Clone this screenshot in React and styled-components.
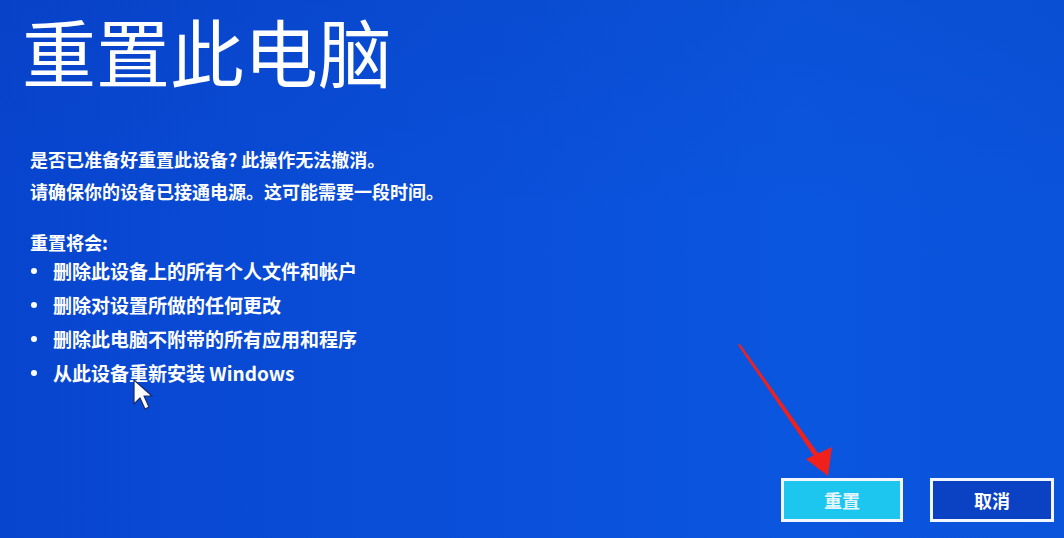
import styled, { createGlobalStyle } from "styled-components";

const GlobalStyle = createGlobalStyle`
    html, body {
        margin: 0;
        padding: 0;
        width: 100%;
        height: 100%;
        overflow: hidden;
    }
    body {
        font-family: "Noto Sans CJK SC", "Noto Sans", sans-serif;
    }
`;

const Screen = styled.div`
    position: relative;
    width: 1064px;
    height: 538px;
    box-sizing: border-box;
    display: flex;
    flex-direction: column;
    color: #fff;
    background:
        linear-gradient(180deg, rgba(0, 30, 120, 0.08), rgba(0, 0, 0, 0) 40%),
        linear-gradient(90deg, #0845cf 0%, #0a4fd9 45%, #0b56df 75%, #0a53db 100%);
    overflow: hidden;
`;

const Title = styled.h1`
    margin: 0;
    padding: 0 0 0 22px;
    font-size: 74px;
    line-height: 100px;
    font-weight: 400;
`;

const Body = styled.div`
    padding: 43px 0 0 30px;
`;

const Para = styled.p`
    margin: 0;
    font-size: 18px;
    line-height: 32px;
    font-weight: 600;
`;

const Heading = styled.p`
    margin: 23px 0 0 0;
    font-size: 18px;
    line-height: 24px;
    font-weight: 600;
`;

const List = styled.ul`
    margin: 0;
    padding: 0;
    list-style: none;
`;

const Item = styled.li`
    display: flex;
    align-items: center;
    font-size: 19px;
    line-height: 34px;
    font-weight: 600;
    &::before {
        content: "";
        width: 6px;
        height: 6px;
        border-radius: 50%;
        background: #fff;
        margin: 0 16px 0 1px;
    }
`;

const Footer = styled.div`
    margin-top: auto;
    display: flex;
    justify-content: flex-end;
    gap: 27px;
    padding: 0 10px 16px 0;
`;

const Button = styled.button`
    width: ${(p) => p.$w}px;
    height: 44px;
    box-sizing: border-box;
    border: 3px solid #f2f6ff;
    background: ${(p) => (p.$primary ? "#1cc6ef" : "#0b42c4")};
    color: ${(p) => (p.$primary ? "#e6f6ff" : "#fff")};
    font-family: "Noto Sans CJK SC", sans-serif;
    font-size: 18px;
    font-weight: 700;
    cursor: pointer;
`;

const Overlay = styled.svg`
    position: absolute;
    left: ${(p) => p.$x}px;
    top: ${(p) => p.$y}px;
    pointer-events: none;
`;

const App = () => {
    return (
        <Screen>
            <GlobalStyle />
            <Title>重置此电脑</Title>
            <Body>
                <Para>是否已准备好重置此设备? 此操作无法撤消。</Para>
                <Para>请确保你的设备已接通电源。这可能需要一段时间。</Para>
                <Heading>重置将会:</Heading>
                <List>
                    <Item>删除此设备上的所有个人文件和帐户</Item>
                    <Item>删除对设置所做的任何更改</Item>
                    <Item>删除此电脑不附带的所有应用和程序</Item>
                    <Item>从此设备重新安装 Windows</Item>
                </List>
            </Body>
            <Footer>
                <Button $primary $w={122}>重置</Button>
                <Button $w={124}>取消</Button>
            </Footer>

            {/* mouse pointer */}
            <Overlay $x={132} $y={378} width="26" height="36" viewBox="0 0 26 36">
                <path d="M2 2 L2 26 L8 20 L13 31 L17 29 L12 18 L20 18 Z" fill="#fff" stroke="#1a2a6a" strokeWidth="1.2" strokeLinejoin="round" />
            </Overlay>

            {/* red arrow */}
            <Overlay $x={730} $y={338} width="110" height="145" viewBox="0 0 110 145">
                <path d="M8 7 L10 6 L90 118 L86 121 Z" fill="#f0211c" />
                <path d="M98 138 L76 121 L102 109 Z" fill="#f0211c" />
            </Overlay>
        </Screen>
    );
};

export default App;
